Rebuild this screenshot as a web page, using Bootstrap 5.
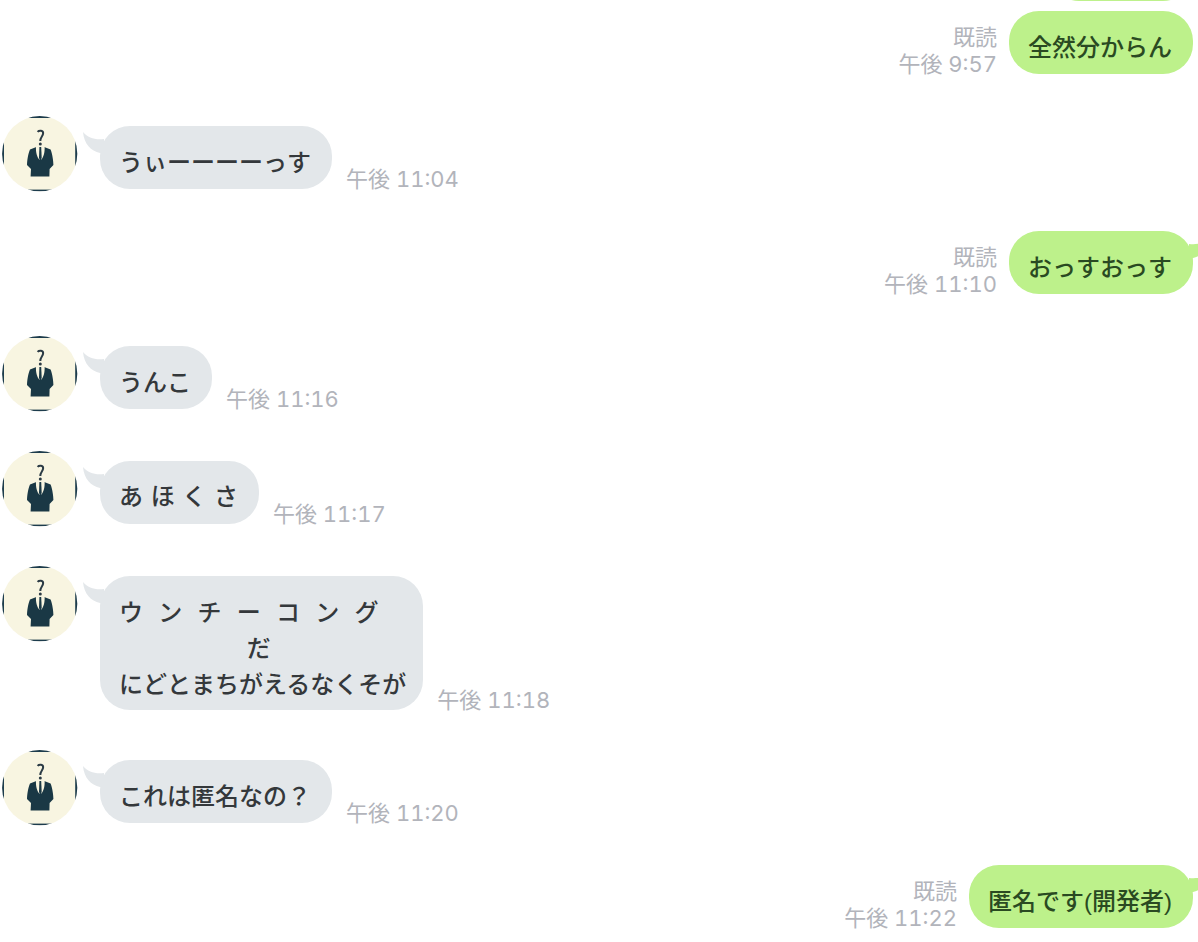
<!DOCTYPE html>
<html lang="ja">
<head>
<meta charset="utf-8">
<meta name="viewport" content="width=device-width, initial-scale=1">
<title>トーク</title>
<link href="https://cdn.jsdelivr.net/npm/bootstrap@5.3.0/dist/css/bootstrap.min.css" rel="stylesheet">
<style>
  body { background: #fff; font-family: "Liberation Sans", "Noto Sans CJK JP", sans-serif; }
  .talk { padding: 0 5px 0 2px; }
  .msg { margin-bottom: 38px; }
  .msg-long { margin-bottom: 36px; }
  .msg-in { padding-top: 10px; }
  .bubble { position: relative; margin-bottom: 4px; padding: 19px 21px 9px 19px; border-radius: 30px;
    font-size: 24px; font-weight: 500; line-height: 35px; white-space: pre; }
  .msg-in .bubble { background: #e3e7ea; color: #34383b; margin-left: 22px; }
  .msg-out .bubble { background: #bdf18b; color: #2a4a22; }
  .bubble-spaced { font-family: "DejaVu Sans", "Noto Sans CJK JP", sans-serif; }
  .bubble-long { padding-right: 17px; padding-bottom: 7px; line-height: 36px; }
  .bubble-cut { width: 144px; height: 63px; margin: -62px 0 10px; }
  .stamp { font-family: Inter, "Noto Sans CJK JP", sans-serif; font-variant-numeric: tabular-nums;
    font-size: 22px; line-height: 27px; color: #b2b4bb; white-space: nowrap; }
  .msg-in .stamp { margin-left: 14px; }
  .msg-out .stamp { margin-right: 12px; text-align: right; }
  .avatar { width: 76px; height: 76px; margin-top: -10px; }
  .tail { position: absolute; top: 6px; width: 22px; height: 22px; }
  .msg-in .tail { left: -17px; fill: #e3e7ea; }
  .msg-out .tail { right: -17px; fill: #bdf18b; transform: scaleX(-1); }
</style>
</head>
<body>
<svg class="position-absolute" width="0" height="0" aria-hidden="true">
  <symbol id="tail" viewBox="0 0 22 22"><path d="M0 0C5 6 12 8 21 7L21 21H17C8 19 1 12 0 0Z"/></symbol>
  <clipPath id="round"><circle cx="37.7" cy="37.7" r="37.6"/></clipPath>
  <symbol id="person" viewBox="0 0 76 76">
    <circle cx="37.7" cy="37.7" r="37.6" fill="#f8f5e1"/>
    <g clip-path="url(#round)" fill="#1d3c4d">
      <rect x="26" width="24" height="2"/>
      <rect x="26" y="73.6" width="24" height="2"/>
      <rect y="22" width="2" height="32"/>
      <rect x="73.2" y="22" width="3" height="32"/>
    </g>
    <path d="M35.6 15.8C37 14.2 41.6 14 41.1 17.6C40.8 20.4 38.4 21 38.3 25" fill="none" stroke="#2b3b45" stroke-width="2"/>
    <circle cx="38.3" cy="28" r="1.5" fill="#2b3b45"/>
    <path d="M34.4 31L28 33.5C26 38 25 45 25 49L29 53L28.6 60.5H47.4L47.6 53L51.4 49C51.4 45 50.4 38 48.6 33.5L42.2 31Z" fill="#1a3845"/>
    <path d="M34 31H42.6C43 36 41.5 41 39.4 43.5H37.2C35 41 33.6 36 34 31Z" fill="#f8f5e1"/>
    <path d="M37.4 31H39.2L39.7 42L38.4 45L37 42Z" fill="#1a3845"/>
  </symbol>
</svg>

<main class="talk container-fluid overflow-hidden">
  <div class="msg-out d-flex justify-content-end"><div class="bubble bubble-cut" aria-hidden="true"></div></div>

  <div class="msg msg-out d-flex justify-content-end align-items-end">
    <div class="stamp">既読<br>午後 9:57</div>
    <div class="bubble">全然分からん</div>
  </div>

  <div class="msg msg-in d-flex align-items-end">
    <svg class="avatar align-self-start flex-shrink-0" role="img" aria-label="匿名"><use href="#person"/></svg>
    <div class="bubble"><svg class="tail"><use href="#tail"/></svg>うぃーーーーっす</div>
    <div class="stamp">午後 11:04</div>
  </div>

  <div class="msg msg-out d-flex justify-content-end align-items-end">
    <div class="stamp">既読<br>午後 11:10</div>
    <div class="bubble"><svg class="tail"><use href="#tail"/></svg>おっすおっす</div>
  </div>

  <div class="msg msg-in d-flex align-items-end">
    <svg class="avatar align-self-start flex-shrink-0" role="img" aria-label="匿名"><use href="#person"/></svg>
    <div class="bubble"><svg class="tail"><use href="#tail"/></svg>うんこ</div>
    <div class="stamp">午後 11:16</div>
  </div>

  <div class="msg msg-in d-flex align-items-end">
    <svg class="avatar align-self-start flex-shrink-0" role="img" aria-label="匿名"><use href="#person"/></svg>
    <div class="bubble bubble-spaced"><svg class="tail"><use href="#tail"/></svg>あ ほ く さ</div>
    <div class="stamp">午後 11:17</div>
  </div>

  <div class="msg msg-long msg-in d-flex align-items-end">
    <svg class="avatar align-self-start flex-shrink-0" role="img" aria-label="匿名"><use href="#person"/></svg>
    <div class="bubble bubble-spaced bubble-long"><svg class="tail"><use href="#tail"/></svg>ウ  ン  チ  ー  コ  ン  グ
　　　　　 だ
にどとまちがえるなくそが</div>
    <div class="stamp">午後 11:18</div>
  </div>

  <div class="msg msg-in d-flex align-items-end">
    <svg class="avatar align-self-start flex-shrink-0" role="img" aria-label="匿名"><use href="#person"/></svg>
    <div class="bubble"><svg class="tail"><use href="#tail"/></svg>これは匿名なの？</div>
    <div class="stamp">午後 11:20</div>
  </div>

  <div class="msg-out d-flex justify-content-end align-items-end">
    <div class="stamp">既読<br>午後 11:22</div>
    <div class="bubble"><svg class="tail"><use href="#tail"/></svg>匿名です(開発者)</div>
  </div>
</main>
<script src="https://cdn.jsdelivr.net/npm/bootstrap@5.3.0/dist/js/bootstrap.bundle.min.js"></script>
</body>
</html>
